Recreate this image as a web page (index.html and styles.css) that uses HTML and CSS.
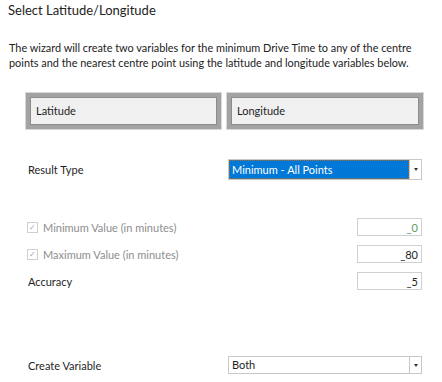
FILE: index.html
```html
<!DOCTYPE html>
<html lang="en">
<head>
  <meta charset="UTF-8">
  <title>Select Latitude/Longitude</title>
  <link rel="stylesheet" href="styles.css">
</head>
<body>
  <div class="title">Select Latitude/Longitude</div>
  <div class="intro">
    The wizard will create two variables for the minimum Drive Time to any of the centre<br>
    points and the nearest centre point using the latitude and longitude variables below.
  </div>

  <div class="fields">
    <div class="drop-field">Latitude</div>
    <div class="drop-field">Longitude</div>
  </div>

  <div class="row result-row">
    <div class="label">Result Type</div>
    <div class="combo selected">
      <div class="combo-text">Minimum - All Points</div>
      <div class="combo-btn"><span class="arrow"></span></div>
    </div>
  </div>

  <div class="row value-row first">
    <div class="label check-label"><span class="check">&#10003;</span>Minimum Value (in minutes)</div>
    <div class="num green">_0</div>
  </div>
  <div class="row value-row">
    <div class="label check-label"><span class="check">&#10003;</span>Maximum Value (in minutes)</div>
    <div class="num">_80</div>
  </div>
  <div class="row value-row">
    <div class="label">Accuracy</div>
    <div class="num">_5</div>
  </div>

  <div class="row create-row">
    <div class="label">Create Variable</div>
    <div class="combo">
      <div class="combo-text">Both</div>
      <div class="combo-btn"><span class="arrow"></span></div>
    </div>
  </div>
</body>
</html>
```
FILE: styles.css
```css
body {
  margin: 0;
  font-family: Lato, 'Open Sans', sans-serif;
  color: #1e1e1e;
  background: #fff;
  width: 442px;
  height: 382px;
  overflow: hidden;
}
.title {
  font-size: 13px;
  line-height: 18px;
  padding: 1px 0 0 8px;
  color: #222;
}
.intro {
  font-size: 10.9px;
  line-height: 15px;
  margin-top: 21px;
  padding-left: 9px;
  color: #222;
  white-space: nowrap;
}
.fields {
  display: flex;
  gap: 6px;
  margin: 23px 0 0 26px;
}
.drop-field {
  width: 181px;
  height: 28px;
  border: 4px solid #a3a3a3;
  box-shadow: inset 0 0 0 1px #8c8c8c;
  outline: 1px solid #d8d8d8;
  background: #f0f0f0;
  font-size: 11px;
  line-height: 28px;
  padding-left: 6px;
  box-sizing: content-box;
}
.drop-field + .drop-field {
  width: 182px;
}
.row {
  display: flex;
  align-items: center;
  justify-content: space-between;
  padding: 0 20px 0 28px;
  font-size: 11px;
}
.result-row {
  margin-top: 30px;
  height: 21px;
}
.combo {
  width: 194px;
  height: 21px;
  display: flex;
  box-sizing: border-box;
  border: 1px solid #c8c8c8;
  background: #fff;
}
.combo-text {
  flex: 1;
  line-height: 19px;
  padding-left: 3px;
}
.combo.selected .combo-text {
  background: #0078d7;
  color: #fff;
  outline: 1px dotted #b26a2c;
  outline-offset: -1px;
}
.combo-btn {
  width: 11px;
  border-left: 1px solid #c8c8c8;
  display: flex;
  align-items: center;
  justify-content: center;
  background: #fff;
}
.arrow {
  width: 0;
  height: 0;
  border-left: 2px solid transparent;
  border-right: 2px solid transparent;
  border-top: 3px solid #333;
}
.value-row {
  height: 18px;
  margin-top: 9px;
}
.value-row.first {
  margin-top: 38px;
}
.check-label {
  color: #8d8d8d;
  display: flex;
  align-items: center;
  margin-left: -1px;
}
.check {
  width: 9px;
  height: 9px;
  border: 1px solid #cfcfcf;
  font-size: 8px;
  line-height: 9px;
  text-align: center;
  color: #a8a8a8;
  margin-right: 5px;
}
.num {
  width: 65px;
  height: 18px;
  box-sizing: border-box;
  border: 1px solid #d0d0d0;
  text-align: right;
  padding-right: 3px;
  line-height: 17px;
}
.num.green {
  color: #5c9a5c;
}
.create-row {
  margin-top: 66px;
  height: 18px;
}
.create-row .combo {
  height: 18px;
}
.create-row .combo-text {
  line-height: 16px;
}
```
